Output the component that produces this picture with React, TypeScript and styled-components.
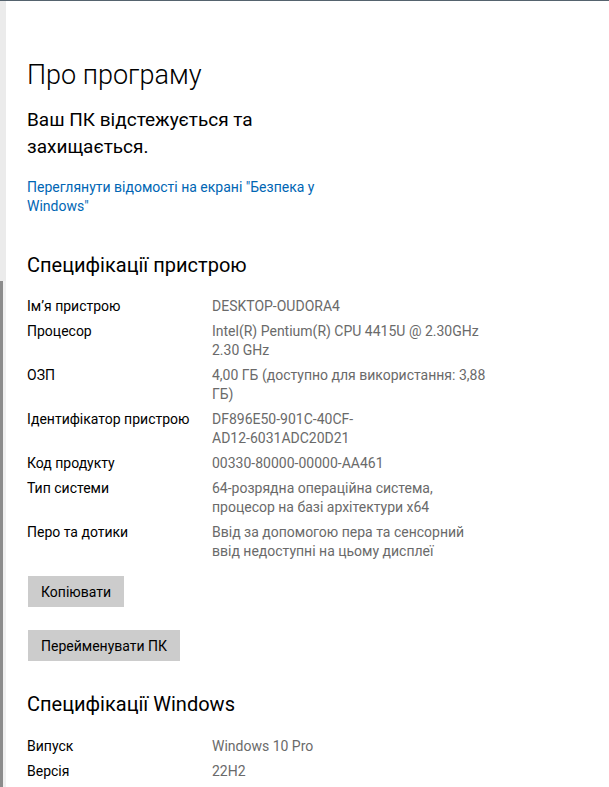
import React from 'react';
import styled, { createGlobalStyle } from 'styled-components';

const GlobalStyle = createGlobalStyle`
    html, body {
        margin: 0;
        padding: 0;
        background: #ffffff;
    }
    body {
        font-family: Roboto, "Liberation Sans", "Noto Sans", sans-serif;
        color: #000000;
    }
`;

const Window = styled.div`
    display: flex;
    width: 609px;
    height: 787px;
    overflow: hidden;
    border-top: 1px solid #55636e;
    box-sizing: border-box;
    background: #ffffff;
`;

const Rail = styled.div`
    display: flex;
    flex-direction: column;
    width: 6px;
    flex-shrink: 0;
`;

const RailTop = styled.div`
    height: 280px;
    background: #ebebeb;
`;

const RailBottom = styled.div`
    flex: 1;
    background: linear-gradient(to right, #8c8c8c 0, #8c8c8c 3px, #f0f0f0 3px);
`;

const Content = styled.main`
    flex: 1;
    padding: 56px 0 0 21px;
`;

const Title = styled.h1`
    margin: 0;
    font-size: 27px;
    font-weight: 300;
    line-height: 36px;
`;

const Status = styled.p`
    margin: 13px 0 0;
    font-size: 19px;
    line-height: 27px;
    width: 240px;
`;

const SecurityLink = styled.a`
    display: block;
    margin-top: 18px;
    font-size: 14px;
    line-height: 19px;
    color: #0066b4;
    text-decoration: none;
    width: 290px;
`;

const SectionTitle = styled.h2<{ $gap: number }>`
    margin: ${p => p.$gap}px 0 0;
    font-size: 20px;
    font-weight: 400;
    line-height: 27px;
`;

const SpecList = styled.dl<{ $gap: number }>`
    margin: ${p => p.$gap}px 0 0;
    display: grid;
    grid-template-columns: 185px 280px;
    row-gap: 6px;
    font-size: 14px;
    line-height: 19px;
`;

const SpecLabel = styled.dt`
    margin: 0;
    color: #000000;
    white-space: nowrap;
`;

const SpecValue = styled.dd`
    margin: 0;
    color: #6a6a6a;
    white-space: nowrap;
`;

const Actions = styled.div`
    display: flex;
    flex-direction: column;
    align-items: flex-start;
    gap: 23px;
    margin-top: 15px;
    padding-left: 1px;
`;

const ActionButton = styled.button`
    height: 31px;
    padding: 0 13px;
    border: none;
    background: #cccccc;
    font-family: inherit;
    font-size: 14px;
    color: #000000;
`;

const deviceSpecs: [string, string[]][] = [
    ['Ім’я пристрою', ['DESKTOP-OUDORA4']],
    ['Процесор', ['Intel(R) Pentium(R) CPU 4415U @ 2.30GHz', '2.30 GHz']],
    ['ОЗП', ['4,00 ГБ (доступно для використання: 3,88', 'ГБ)']],
    ['Ідентифікатор пристрою', ['DF896E50-901C-40CF-', 'AD12-6031ADC20D21']],
    ['Код продукту', ['00330-80000-00000-AA461']],
    ['Тип системи', ['64-розрядна операційна система,', 'процесор на базі архітектури x64']],
    ['Перо та дотики', ['Ввід за допомогою пера та сенсорний', 'ввід недоступні на цьому дисплеї']],
];

const windowsSpecs: [string, string[]][] = [
    ['Випуск', ['Windows 10 Pro']],
    ['Версія', ['22H2']],
];

function Specs({ items, gap }: { items: [string, string[]][]; gap: number }) {
    return (
        <SpecList $gap={gap}>
            {items.map(([label, lines]) => (
                <React.Fragment key={label}>
                    <SpecLabel>{label}</SpecLabel>
                    <SpecValue>
                        {lines.map((line, i) => (
                            <React.Fragment key={i}>
                                {i > 0 && <br />}
                                {line}
                            </React.Fragment>
                        ))}
                    </SpecValue>
                </React.Fragment>
            ))}
        </SpecList>
    );
}

export default function App() {
    return (
        <>
            <GlobalStyle />
            <Window>
                <Rail>
                    <RailTop />
                    <RailBottom />
                </Rail>
                <Content>
                    <Title>Про програму</Title>
                    <Status>Ваш ПК відстежується та захищається.</Status>
                    <SecurityLink href="#">
                        Переглянути відомості на екрані "Безпека у Windows"
                    </SecurityLink>
                    <SectionTitle $gap={36}>Специфікації пристрою</SectionTitle>
                    <Specs items={deviceSpecs} gap={18} />
                    <Actions>
                        <ActionButton>Копіювати</ActionButton>
                        <ActionButton>Перейменувати ПК</ActionButton>
                    </Actions>
                    <SectionTitle $gap={30}>Специфікації Windows</SectionTitle>
                    <Specs items={windowsSpecs} gap={19} />
                </Content>
            </Window>
        </>
    );
}
